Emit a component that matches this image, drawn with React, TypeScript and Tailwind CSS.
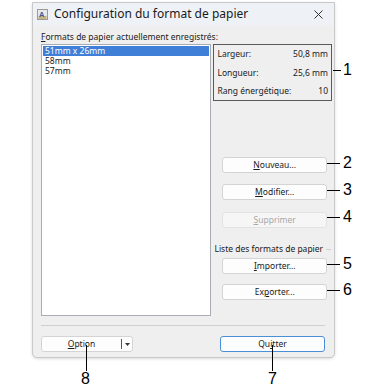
import React from "react";

const F = { fontFamily: '"Noto Sans", "Liberation Sans", sans-serif' };

function Btn({ children, disabled, primary, className = "" }: { children: React.ReactNode; disabled?: boolean; primary?: boolean; className?: string }) {
  return (
    <div
      className={
        "flex h-[16px] items-center justify-center rounded-[3px] border text-[8.5px] leading-none " +
        (primary
          ? "border-[#4a90d9] bg-[#fdfdfd] text-[#1a1a1a] "
          : disabled
          ? "border-[#e2e2e2] bg-[#f6f6f6] text-[#a8a8a8] "
          : "border-[#d4d4d4] bg-[#fdfdfd] text-[#1a1a1a] ") +
        className
      }
    >
      {children}
    </div>
  );
}

function U({ c }: { c: string }) {
  return <span className="underline underline-offset-1">{c}</span>;
}

export default function App() {
  return (
    <div className="relative h-[388px] w-[371px] overflow-hidden bg-white" style={F}>
      {/* window */}
      <div className="ml-[32px] mt-[2px] flex h-[356px] w-[303px] flex-col rounded-b-[5px] border border-[#c9c9c9] bg-[#efefef] shadow-[0_1px_3px_rgba(0,0,0,0.15)]">
        {/* title bar */}
        <div className="flex h-[22px] items-center bg-[#eef2f7] pl-[4px] pr-[8px]">
          <svg width="11" height="11" viewBox="0 0 11 11" className="mr-[6px]">
            <rect x="0.5" y="0.5" width="10" height="10" fill="#e8e8e8" stroke="#9a9a9a" />
            <rect x="1.5" y="7" width="8" height="3" fill="#c9b27a" />
            <text x="2" y="8" fontSize="7.5" fontFamily="Liberation Sans" fill="#3a5a9a" fontWeight="bold">A</text>
          </svg>
          <span className="text-[12px] text-[#1a1a1a]">Configuration du format de papier</span>
          <svg width="9" height="9" viewBox="0 0 9 9" className="ml-auto mr-[3px]">
            <path d="M0.5 0.5 L8.5 8.5 M8.5 0.5 L0.5 8.5" stroke="#333" strokeWidth="1" />
          </svg>
        </div>
        {/* body */}
        <div className="flex flex-1 flex-col pl-[8px] pr-[2px]">
          <div className="mt-[5px] h-[13px] text-[8.5px] leading-[13px] text-[#1a1a1a]">
            <U c="F" />ormats de papier actuellement enregistrés:
          </div>
          <div className="mt-[1px] flex">
            {/* list */}
            <div className="h-[272px] w-[171px] border border-[#a9adb3] bg-white p-[1px] text-[8.5px] leading-[10px] text-[#1a1a1a]">
              <div className="bg-[#3f7fd8] pl-[2px] text-white">51mm x 26mm</div>
              <div className="pl-[2px]">58mm</div>
              <div className="pl-[2px]">57mm</div>
            </div>
            {/* right column */}
            <div className="ml-[2px] flex w-[119px] flex-col">
              <div className="flex h-[57px] flex-col justify-between border border-[#5a5a5a] px-[3px] py-[4px] text-[8.5px] leading-[10px] text-[#1a1a1a]">
                <div className="flex justify-between"><span>Largeur:</span><span>50,8 mm</span></div>
                <div className="flex justify-between"><span>Longueur:</span><span>25,6 mm</span></div>
                <div className="flex justify-between"><span>Rang énergétique:</span><span>10</span></div>
              </div>
              <div className="flex flex-col pl-[9px] pr-[5px]">
                <Btn className="mt-[56px]"><U c="N" />ouveau...</Btn>
                <Btn className="mt-[11px]"><U c="M" />odifier...</Btn>
                <Btn className="mt-[12px]" disabled><U c="S" />upprimer</Btn>
              </div>
              <div className="mt-[15px] flex items-center pl-[1px] pr-[1px] text-[8.5px] leading-[12px] text-[#1a1a1a]">
                <span>Liste des formats de papier</span>
                <div className="ml-[3px] h-px flex-1 bg-[#cfcfcf]" />
              </div>
              <div className="flex flex-col pl-[9px] pr-[5px]">
                <Btn className="mt-[3px]"><U c="I" />mporter...</Btn>
                <Btn className="mt-[10px]">Ex<U c="p" />orter...</Btn>
              </div>
            </div>
          </div>
          <div className="mr-[7px] mt-[9px] h-px bg-[#cfcfcf]" />
          <div className="mt-[10px] flex justify-between pr-[7px]">
            <div className="flex h-[16px] w-[92px] items-center rounded-[3px] border border-[#d4d4d4] bg-[#fdfdfd] text-[8.5px] leading-none text-[#1a1a1a]">
              <div className="flex flex-1 items-center justify-center"><U c="O" />ption</div>
              <div className="h-[10px] w-px bg-[#555]" />
              <div className="flex w-[10px] items-center justify-center">
                <svg width="5" height="3" viewBox="0 0 5 3"><path d="M0 0 L5 0 L2.5 3 Z" fill="#333" /></svg>
              </div>
            </div>
            <Btn primary className="w-[105px]">Qu<U c="i" />tter</Btn>
          </div>
        </div>
      </div>

      {/* callouts */}
      <div className="absolute left-[333px] top-[70px] h-px w-[8px] bg-black" />
      <div className="absolute left-[343px] top-[60px] text-[16px] leading-[20px] text-black" style={{ fontFamily: '"Liberation Sans", sans-serif' }}>1</div>
      {[
        { y: 163, n: "2" },
        { y: 190, n: "3" },
        { y: 217, n: "4" },
        { y: 264, n: "5" },
        { y: 290, n: "6" },
      ].map((c) => (
        <React.Fragment key={c.n}>
          <div className="absolute left-[327px] h-px w-[13px] bg-black" style={{ top: c.y }} />
          <div className="absolute left-[343px] text-[16px] leading-[20px] text-black" style={{ top: c.y - 10, fontFamily: '"Liberation Sans", sans-serif' }}>{c.n}</div>
        </React.Fragment>
      ))}
      <div className="absolute left-[86px] top-[345px] h-[26px] w-px bg-black" />
      <div className="absolute left-[81px] top-[369px] text-[16px] leading-[20px] text-black" style={{ fontFamily: '"Liberation Sans", sans-serif' }}>8</div>
      <div className="absolute left-[272px] top-[345px] h-[26px] w-px bg-black" />
      <div className="absolute left-[268px] top-[369px] text-[16px] leading-[20px] text-black" style={{ fontFamily: '"Liberation Sans", sans-serif' }}>7</div>
    </div>
  );
}
